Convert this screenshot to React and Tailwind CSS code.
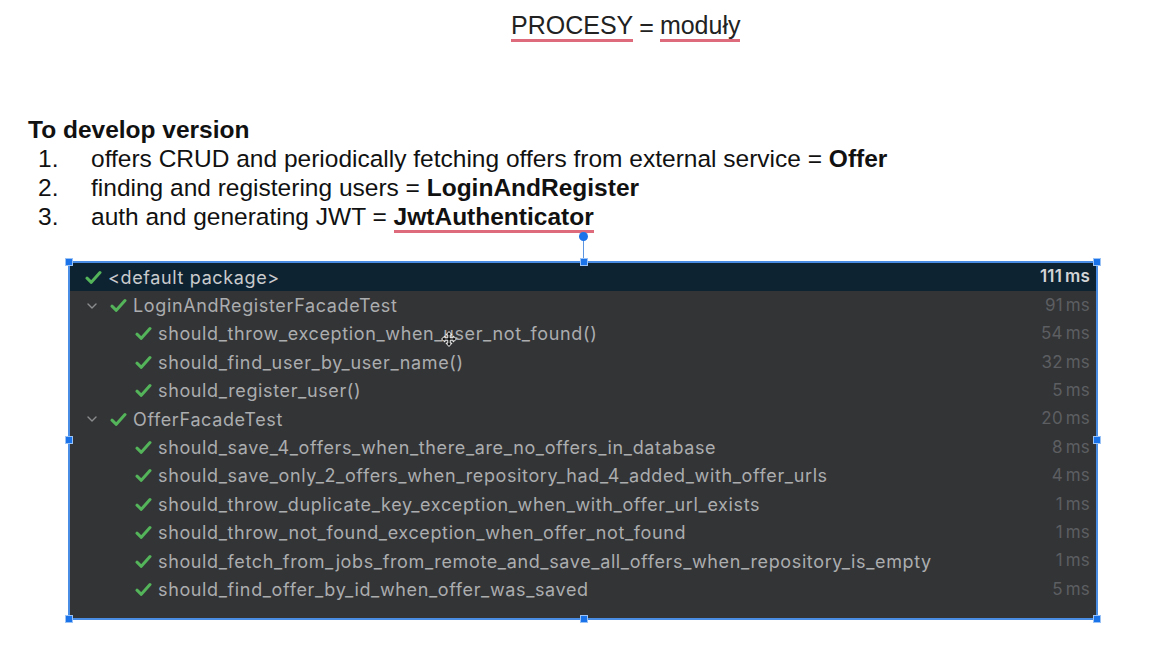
import React from 'react';

const doc = { fontFamily: '"Liberation Sans", Arial, sans-serif' };
const ide = { fontFamily: 'Inter, "Noto Sans", sans-serif' };

const tests = [
  { name: '<default package>', time: '111', level: 0, head: true },
  { name: 'LoginAndRegisterFacadeTest', time: '91', level: 1 },
  { name: 'should_throw_exception_when_user_not_found()', time: '54', level: 2 },
  { name: 'should_find_user_by_user_name()', time: '32', level: 2 },
  { name: 'should_register_user()', time: '5', level: 2 },
  { name: 'OfferFacadeTest', time: '20', level: 1 },
  { name: 'should_save_4_offers_when_there_are_no_offers_in_database', time: '8', level: 2 },
  { name: 'should_save_only_2_offers_when_repository_had_4_added_with_offer_urls', time: '4', level: 2 },
  { name: 'should_throw_duplicate_key_exception_when_with_offer_url_exists', time: '1', level: 2 },
  { name: 'should_throw_not_found_exception_when_offer_not_found', time: '1', level: 2 },
  { name: 'should_fetch_from_jobs_from_remote_and_save_all_offers_when_repository_is_empty', time: '1', level: 2 },
  { name: 'should_find_offer_by_id_when_offer_was_saved', time: '5', level: 2 },
];

const Check = () => (
  <svg width="17" height="15" viewBox="0 0 17 15" className="shrink-0">
    <path d="M2 8.2 L6.3 12.3 L15 2.6" fill="none" stroke="#54b45a" strokeWidth="3" strokeLinecap="round" strokeLinejoin="round" />
  </svg>
);

const Chevron = () => (
  <svg width="12" height="8" viewBox="0 0 12 8" className="shrink-0">
    <path d="M2 2 L6 6 L10 2" fill="none" stroke="#8a8c8e" strokeWidth="1.4" strokeLinecap="round" strokeLinejoin="round" />
  </svg>
);

// selection handle in the drawing app
const Handle = ({ className }) => (
  <div className={`absolute w-[8px] h-[8px] bg-[#1a73e8] border border-[#9cc3f5] ${className}`} />
);

const Row = ({ t }) => {
  const pad = t.level === 0 ? 'pl-[15px]' : t.level === 1 ? 'pl-[16px]' : 'pl-[65px]';
  return (
    <div className={`flex items-center h-[28.4px] pr-[6px] ${pad} ${t.head ? 'bg-[#0e2332]' : ''}`}>
      {t.level === 1 && (
        <span className="mr-[12px]">
          <Chevron />
        </span>
      )}
      <Check />
      <span className={`ml-[6px] text-[18px] tracking-[0.035em] ${t.head ? 'text-[#c9cbcd]' : 'text-[#abadaf]'}`}>{t.name}</span>
      <span className={`ml-auto text-[17px] tracking-[0.01em] ${t.head ? 'text-[#d2d4d6] font-semibold' : 'text-[#5c5e61]'}`}>
        {t.time}
        <span className="ml-[3px]">ms</span>
      </span>
    </div>
  );
};

export default function App() {
  return (
    <div className="w-[1151px] h-[645px] bg-white overflow-hidden text-[#111]" style={doc}>
      {/* title */}
      <div className="pt-[12px] pl-[511px] text-[25px] leading-[30px] text-[#222] flex items-start">
        <span className="border-b-[3px] border-[#de6b7c] leading-[27px]">PROCESY</span>
        <span className="px-[6px]">=</span>
        <span className="border-b-[3px] border-[#de6b7c] leading-[27px]">moduły</span>
      </div>

      {/* list */}
      <div className="mt-[73px] pl-[28px]">
        <div className="font-bold text-[24.5px] leading-[29px]">To develop version</div>
        <ol className="text-[24.5px] leading-[29px]">
          <li className="flex">
            <span className="w-[63px] pl-[10px]">1.</span>
            <span>offers CRUD and periodically fetching offers from external service = <b>Offer</b></span>
          </li>
          <li className="flex">
            <span className="w-[63px] pl-[10px]">2.</span>
            <span>finding and registering users = <b>LoginAndRegister</b></span>
          </li>
          <li className="flex">
            <span className="w-[63px] pl-[10px]">3.</span>
            <span>
              auth and generating JWT ={' '}
              <b className="border-b-[3px] border-[#de6b7c] leading-[26px] inline-block">JwtAuthenticator</b>
            </span>
          </li>
        </ol>
      </div>

      {/* screenshot of IDE test results */}
      <div className="relative ml-[68px] mt-[28px] w-[1030px] h-[359px] border-2 border-[#4a8de4] bg-[#333436]" style={ide}>
        {tests.map((t, i) => (
          <Row key={i} t={t} />
        ))}

        {/* rotate handle */}
        <div className="absolute left-[513px] top-[-27px] w-px h-[27px] bg-[#5d95e0]" />
        <div className="absolute left-[509px] top-[-31px] w-[9px] h-[9px] rounded-full bg-[#1a73e8]" />

        <Handle className="left-[-5px] top-[-5px]" />
        <Handle className="left-[510px] top-[-5px]" />
        <Handle className="right-[-5px] top-[-5px]" />
        <Handle className="left-[-5px] top-[173px]" />
        <Handle className="right-[-5px] top-[173px]" />
        <Handle className="left-[-5px] bottom-[-5px]" />
        <Handle className="left-[510px] bottom-[-5px]" />
        <Handle className="right-[-5px] bottom-[-5px]" />

        {/* move cursor */}
        <svg className="absolute left-[371px] top-[68px]" width="16" height="16" viewBox="0 0 16 16">
          <path d="M8 0.5 L11 3.8 H9.2 V6.8 H12.2 V5 L15.5 8 L12.2 11 V9.2 H9.2 V12.2 H11 L8 15.5 L5 12.2 H6.8 V9.2 H3.8 V11 L0.5 8 L3.8 5 V6.8 H6.8 V3.8 H5 Z" fill="#111" stroke="#fff" strokeWidth="1" />
        </svg>
      </div>
    </div>
  );
}
